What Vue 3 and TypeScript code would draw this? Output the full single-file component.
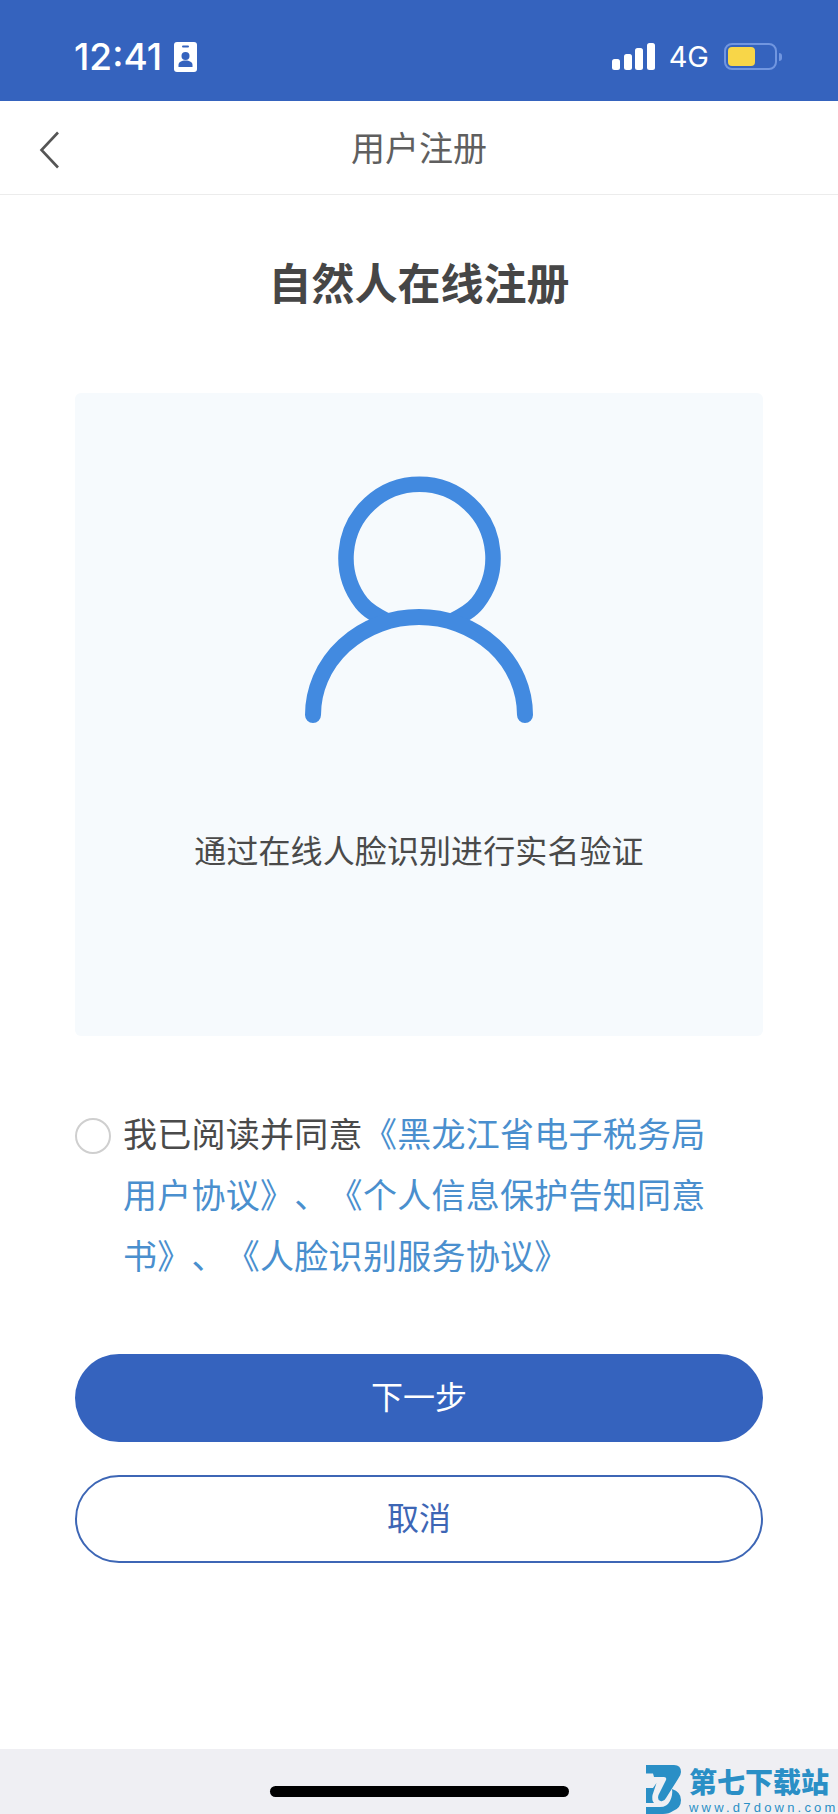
<script setup lang="ts">
const signalBars = [11, 16, 22, 27]
</script>

<template>
  <div class="page">
    <header class="status-bar">
      <div class="status-left">
        <span class="time">12:41</span>
        <svg class="badge" width="23" height="30" viewBox="0 0 23 30">
          <rect width="23" height="30" rx="3" fill="#fff" />
          <rect x="8" y="3.500" width="7" height="2" rx="1" fill="#3563be" />
          <circle cx="11.500" cy="14" r="4" fill="#3563be" />
          <path d="M4.500 25v-2c0-3 3-4.500 7-4.500s7 1.500 7 4.500v2z" fill="#3563be" />
        </svg>
      </div>
      <div class="status-right">
        <div class="signal">
          <i v-for="h in signalBars" :key="h" :style="{ height: h + 'px' }"></i>
        </div>
        <span class="network">4G</span>
        <div class="battery"><div class="battery-level"></div></div>
        <div class="battery-nub"></div>
      </div>
    </header>

    <nav class="nav-bar">
      <svg class="back" width="22" height="38" viewBox="0 0 22 38" fill="none">
        <path d="M19 1.500 2.500 19 19 36.500" stroke="#555" stroke-width="2.600" />
      </svg>
      <span class="nav-title">用户注册</span>
    </nav>

    <main class="content">
      <h1 class="title">自然人在线注册</h1>

      <section class="face-card">
        <svg class="person" width="232" height="262" viewBox="0 0 232 262" fill="none">
          <path d="M86 146C76 141 65 135.500 58.500 127A73.500 73.500 0 1 1 174.500 127C168 135.500 157 141 147 146" stroke="#428ae0" stroke-width="15.500" />
          <path d="M10 239A106 98 0 0 1 222 239" stroke="#428ae0" stroke-width="16" stroke-linecap="round" />
        </svg>
        <p class="face-text">通过在线人脸识别进行实名验证</p>
      </section>

      <section class="agree">
        <span class="radio"></span>
        <p class="agree-text">我已阅读并同意<a>《黑龙江省电子税务局用户协议》、《个人信息保护告知同意书》、《人脸识别服务协议》</a></p>
      </section>

      <button class="btn btn-primary">下一步</button>
      <button class="btn btn-outline">取消</button>
    </main>

    <footer class="home-bar">
      <div class="home-indicator"></div>
      <div class="watermark">
        <svg class="wm-logo" width="35" height="49" viewBox="0 0 35 49" fill="#2a8fc6">
          <path d="M0 0H28Q35 0 35 7Q35 10 32 14L20 33Q18 37 14.500 36Q11 35 12.500 30L20 15Q21 12 18 12H8L7 8.500H0Z" />
          <path d="M0 23H7L10.500 18 6.500 30Q5.500 35 8 38H0Z" />
          <path d="M26 24Q35 27 35 35Q35 43 27 46Q23 49 17 49H0V42H14Q21 42 24 36Q27 30 26 24Z" />
        </svg>
        <div class="wm-text">
          <span class="wm-name">第七下载站</span>
          <span class="wm-url">www.d7down.com</span>
        </div>
      </div>
    </footer>
  </div>
</template>

<style>
html,
body {
  margin: 0;
  background: #fff;
}
</style>

<style scoped>
.page {
  position: relative;
  display: flex;
  flex-direction: column;
  width: 838px;
  height: 1814px;
  overflow: hidden;
  background: #fff;
  font-family: "Noto Sans CJK SC", "Liberation Sans", sans-serif;
  text-spacing-trim: space-all;
}

.status-bar {
  display: flex;
  align-items: center;
  justify-content: space-between;
  flex: none;
  box-sizing: border-box;
  height: 101px;
  padding: 12px 56px 0 74px;
  background: #3563be;
  color: #fff;
}

.status-left,
.status-right {
  display: flex;
  align-items: center;
}

.time {
  font-family: Inter, "Liberation Sans", sans-serif;
  font-size: 37px;
  font-weight: 500;
  line-height: 40px;
}

.badge {
  margin-left: 12px;
}

.signal {
  display: flex;
  align-items: flex-end;
  gap: 3.500px;
  height: 27px;
}

.signal i {
  display: block;
  width: 8px;
  border-radius: 2.500px;
  background: #fff;
}

.network {
  margin-left: 14px;
  font-family: Inter, "Liberation Sans", sans-serif;
  font-size: 29px;
  line-height: 34px;
}

.battery {
  box-sizing: border-box;
  width: 53px;
  height: 27px;
  margin-left: 15px;
  padding: 2px;
  border: 2px solid #7196e0;
  border-radius: 8px;
}

.battery-level {
  width: 27px;
  height: 19px;
  border-radius: 4px;
  background: #f8d648;
}

.battery-nub {
  width: 3px;
  height: 8px;
  margin-left: 2px;
  border-radius: 0 3px 3px 0;
  background: #7196e0;
}

.nav-bar {
  display: flex;
  align-items: center;
  justify-content: center;
  position: relative;
  flex: none;
  box-sizing: border-box;
  height: 94px;
  padding-bottom: 2px;
  border-bottom: 1px solid #ececec;
}

.back {
  position: absolute;
  left: 39px;
  top: 30px;
}

.nav-title {
  font-size: 34px;
  line-height: 48px;
  color: #5f5f5f;
}

.content {
  display: flex;
  flex-direction: column;
  align-items: center;
  flex: 1;
  padding: 0 75px;
}

.title {
  margin: 56px 0 0;
  font-size: 43px;
  font-weight: 700;
  line-height: 60px;
  color: #464646;
}

.face-card {
  display: flex;
  flex-direction: column;
  align-items: center;
  box-sizing: border-box;
  width: 688px;
  height: 643px;
  margin-top: 82px;
  padding-top: 83px;
  border-radius: 6px;
  background: #f6fafd;
}

.person {
  display: block;
}

.face-text {
  margin: 88px 0 0;
  font-size: 32px;
  line-height: 46px;
  letter-spacing: 0.100px;
  color: #4a4a4a;
}

.agree {
  display: flex;
  align-self: stretch;
  margin-top: 66px;
}

.radio {
  flex: none;
  box-sizing: border-box;
  width: 36px;
  height: 36px;
  margin-top: 16px;
  border: 2px solid #cfcfcf;
  border-radius: 50%;
}

.agree-text {
  width: 584px;
  margin: 0 0 0 12px;
  font-size: 34px;
  line-height: 61px;
  letter-spacing: 0.270px;
  color: #4a4a4a;
}

.agree-text a {
  color: #4a8fce;
}

.btn {
  display: block;
  box-sizing: border-box;
  width: 688px;
  height: 88px;
  padding: 0 0 7px;
  border-radius: 44px;
  font-family: inherit;
  font-size: 32px;
}

.btn-primary {
  margin-top: 69px;
  border: none;
  background: #3563be;
  color: #fff;
}

.btn-outline {
  margin-top: 33px;
  border: 2px solid #3d66b5;
  background: #fff;
  color: #3d66b5;
}

.home-bar {
  position: relative;
  flex: none;
  height: 65px;
  background: #efeff3;
}

.home-indicator {
  position: absolute;
  left: 270px;
  top: 37px;
  width: 299px;
  height: 11px;
  border-radius: 6px;
  background: #000;
}

.watermark {
  position: absolute;
  left: 646px;
  top: 16px;
  display: flex;
  gap: 8px;
}

.wm-text {
  display: flex;
  flex-direction: column;
}

.wm-name {
  font-size: 28px;
  font-weight: 900;
  line-height: 32px;
  color: #2a8fc6;
}

.wm-url {
  margin-top: 4px;
  font-family: "Liberation Sans", sans-serif;
  font-size: 13px;
  line-height: 14px;
  letter-spacing: 3.200px;
  white-space: nowrap;
  color: #2a8fc6;
}
</style>
